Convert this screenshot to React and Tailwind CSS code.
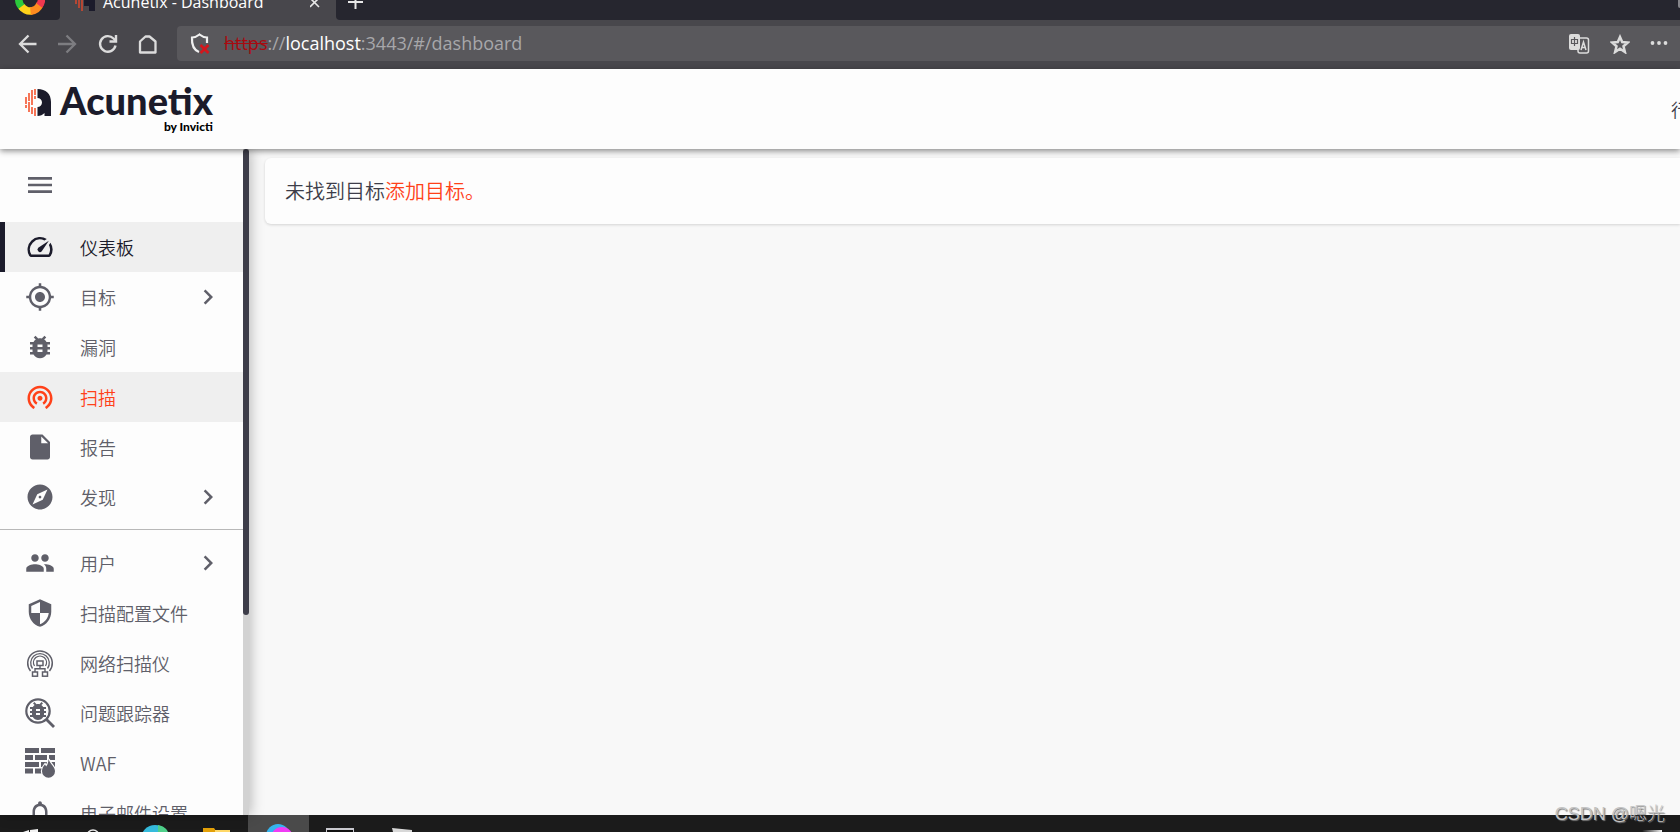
import React, { useState } from 'react';
import {
  MdMenu,
  MdOutlineSpeed,
  MdGpsFixed,
  MdBugReport,
  MdWifiTethering,
  MdInsertDriveFile,
  MdExplore,
  MdPeople,
  MdSecurity,
  MdNotificationsNone,
  MdChevronRight,
} from 'react-icons/md';

const NetworkScannerIcon = () => (
  <svg width="30" height="30" viewBox="0 0 30 30" fill="none" stroke="currentColor">
    <path d="M5.500 23A12.300 12.300 0 1 1 24.500 23" strokeWidth="1.500" />
    <path d="M7.500 20.500A9.300 9.300 0 1 1 22.500 20.500" strokeWidth="1.300" />
    <path d="M9.500 18A6.500 6.500 0 1 1 20.500 18" strokeWidth="1.300" />
    <rect x="12" y="13" width="6" height="4.500" strokeWidth="1.500" />
    <path d="M15 17.500v3M10 24v-3.300h10V24" strokeWidth="1.400" />
    <rect x="7.500" y="24" width="5" height="4.200" strokeWidth="1.500" />
    <rect x="17.500" y="24" width="5" height="4.200" strokeWidth="1.500" />
  </svg>
);

const IssueTrackerIcon = () => (
  <svg width="30" height="30" viewBox="0 0 30 30" fill="none" stroke="currentColor">
    <circle cx="13" cy="13" r="11.700" strokeWidth="2.200" />
    <path d="M21.500 21.500l7.500 7.500" strokeWidth="2.800" />
    <MdBugReport x="1" y="1" size={24} />
  </svg>
);

const WafIcon = () => (
  <svg width="30" height="30" viewBox="0 0 30 30" fill="currentColor">
    <path d="M0 0h14v5H0zM16 0h14v5H16zM0 7h8v5H0zM10 7h12v5H10zM24 7h6v5h-6zM0 14h14v5H0zM16 14h14v5H16zM0 20.500h8v5H0zM10 20.500h8v5h-8z" />
    <path
      d="M23.500 11c1 4.500 6.500 7.500 6.500 12.200a6.500 6.500 0 0 1-13 0c0-3 1.500-5 3-6.700l1.200 2c1.500-2 2.300-4.500 2.300-7.500z"
      stroke="#fdfdfd"
      strokeWidth="2.400"
      paintOrder="stroke"
    />
  </svg>
);

const mainItems = [
  { id: 'dashboard', label: '仪表板', icon: MdOutlineSpeed },
  { id: 'targets', label: '目标', icon: MdGpsFixed, sub: true },
  { id: 'vulns', label: '漏洞', icon: MdBugReport },
  { id: 'scans', label: '扫描', icon: MdWifiTethering },
  { id: 'reports', label: '报告', icon: MdInsertDriveFile },
  { id: 'discovery', label: '发现', icon: MdExplore, sub: true },
];

const settingItems = [
  { id: 'users', label: '用户', icon: MdPeople, sub: true },
  { id: 'profiles', label: '扫描配置文件', icon: MdSecurity },
  { id: 'scanner', label: '网络扫描仪', icon: NetworkScannerIcon },
  { id: 'tracker', label: '问题跟踪器', icon: IssueTrackerIcon },
  { id: 'waf', label: 'WAF', icon: WafIcon },
  { id: 'email', label: '电子邮件设置', icon: MdNotificationsNone },
];

function NavItem({ item, active, onSelect }) {
  const Icon = item.icon;
  let look = 'border-transparent text-[#5f5f69]';
  if (active) look = 'border-[#1b1b2b] bg-[#efefef] text-[#1b1b2b]';
  else if (item.id === 'scans') look = 'border-transparent bg-[#efefef] text-[#ff4119]';

  return (
    <li>
      <a
        href={`#/${item.id}`}
        onClick={() => onSelect(item.id)}
        className={`flex h-[50px] items-center border-l-[5px] pl-5 pr-5 text-lg font-[350] ${look}`}
      >
        <span className="flex w-[30px] shrink-0 justify-center">
          <Icon size={30} />
        </span>
        <span className="ml-[25px] flex-1">{item.label}</span>
        {item.sub && <MdChevronRight size={30} />}
      </a>
    </li>
  );
}

function BrowserBar() {
  return (
    <div className="shrink-0 bg-[#48474c] font-['Open_Sans','Noto_Sans_CJK_SC',sans-serif]">
      {/* Tabs */}
      <div className="flex h-5 overflow-hidden">
        <div className="flex w-[60px] shrink-0 items-start justify-center rounded-br bg-[#26262f]">
          <svg width="30" height="18" viewBox="0 0 30 18" fill="none" strokeWidth="7.500">
            <path d="M4 -3A11.500 11.500 0 0 0 8 8" stroke="#2bc93b" />
            <path d="M6.500 6.500A11.500 11.500 0 0 0 17 11" stroke="#ffd21a" />
            <path d="M15.500 11.200A11.500 11.500 0 0 0 25 4" stroke="#ff8b1f" />
            <path d="M24.300 5.500A11.500 11.500 0 0 0 26.500 -3" stroke="#f0384f" />
          </svg>
        </div>
        <div className="flex w-[276px] shrink-0 items-start text-white">
          <svg width="20" height="12" viewBox="0 0 20 12" className="ml-[15px]">
            <path d="M1 0v4M4 0v8M7 0v11" stroke="#d9482c" strokeWidth="1.500" />
            <path d="M9 0h11v11h-6V6H9z" fill="#1b1b2b" />
          </svg>
          <span className="-mt-2.5 ml-2 flex-1 text-base leading-6">Acunetix - Dashboard</span>
          <button aria-label="Close tab" className="mr-4">
            <svg width="10" height="10" viewBox="0 0 10 10" stroke="#e8e8e8" strokeWidth="1.600">
              <path d="M0 -2l9 9M9 -2l-9 9" />
            </svg>
          </button>
        </div>
        <div className="flex flex-1 items-start justify-between rounded-bl bg-[#26262f] pl-3">
          <button aria-label="New tab">
            <svg width="15" height="10" viewBox="0 0 15 10" stroke="#e8e8e8" strokeWidth="2">
              <path d="M0 2h15M7.500 0v9" />
            </svg>
          </button>
          <span className="h-2 w-0.5 rounded-bl bg-[#85858a]" />
        </div>
      </div>

      {/* Address row */}
      <div className="flex h-[49px] items-center pb-0.5 pl-[18px]">
        <div className="flex items-center gap-5 text-[#dcdcdc]">
          <button aria-label="Back">
            <svg width="20" height="20" viewBox="0 0 20 20" fill="none" stroke="currentColor" strokeWidth="2.300">
              <path d="M18.500 10H2M10.500 1.500L2 10l8.500 8.500" />
            </svg>
          </button>
          <button aria-label="Forward" className="text-[#7d7d81]">
            <svg width="20" height="20" viewBox="0 0 20 20" fill="none" stroke="currentColor" strokeWidth="2.300">
              <path d="M0 10h17M8.500 1.500L17 10l-8.500 8.500" />
            </svg>
          </button>
          <button aria-label="Reload">
            <svg width="20" height="20" viewBox="0 0 20 20" fill="none" stroke="currentColor" strokeWidth="2.400">
              <path d="M17.500 11.500A7.800 7.800 0 1 1 15.500 4.500L18 7" />
              <path d="M18 1v6.500h-6.500" />
            </svg>
          </button>
          <button aria-label="Home">
            <svg width="20" height="20" viewBox="0 0 20 20" fill="none" stroke="currentColor" strokeWidth="2.300" strokeLinejoin="round">
              <path d="M2 7.500l5.500-5h4l6 5v11H2z" />
            </svg>
          </button>
        </div>
        <div className="ml-[19px] flex h-[35px] flex-1 items-center rounded-l bg-[#59585c] pl-[13px] pr-3 text-lg leading-6 text-[#a7a7aa]">
          <svg width="22" height="22" viewBox="0 0 22 22" fill="none">
            <path d="M9 19C4 17 1.500 13 2 4.500c3 0 5-1 7.500-3 2.500 2 4.500 3 7.500 3V10" stroke="#f0f0f0" strokeWidth="2.200" />
            <path d="M10.500 12l8 8M18.500 12l-8 8" stroke="#d4161c" strokeWidth="2.600" />
          </svg>
          <span className="ml-3 flex-1 pb-0.5">
            <s className="text-[#a80a10]">https</s>://<span className="text-white">localhost</span>:3443/#/dashboard
          </span>
          <div className="flex items-center gap-5 text-[#dcdcdc]">
            <button aria-label="Translate">
              <svg width="22" height="22" viewBox="0 0 22 22" fill="none">
                <rect x="10" y="5" width="10.500" height="15" rx="2" stroke="currentColor" strokeWidth="1.500" />
                <rect x="1" y="1" width="11" height="16" rx="2" fill="currentColor" />
                <path d="M3.500 6.500h6v4h-6zM6.500 4v9" stroke="#59585c" strokeWidth="1.200" />
                <path d="M13 17l2.500-8 2.500 8M13.500 14.500h4" stroke="currentColor" strokeWidth="1.500" />
              </svg>
            </button>
            <button aria-label="Favourite">
              <svg width="20" height="20" viewBox="0 0 20 20" fill="none" stroke="currentColor" strokeWidth="2.500">
                <path d="M10 3l2.200 5 5.600.5-4.300 3.800 1.400 5.700-4.900-3.200L5.100 18l1.400-5.700-4.300-3.800L7.800 8z" />
              </svg>
            </button>
            <button aria-label="More">
              <svg width="18" height="6" viewBox="0 0 18 6" fill="currentColor">
                <circle cx="2.500" cy="2" r="1.900" />
                <circle cx="9" cy="2" r="1.900" />
                <circle cx="15.500" cy="2" r="1.900" />
              </svg>
            </button>
          </div>
        </div>
      </div>
    </div>
  );
}

function Header() {
  return (
    <header className="relative z-20 flex h-20 shrink-0 justify-between bg-[#fdfdfd] shadow-[0_2px_6px_rgba(0,0,0,0.45)]">
      <a href="#/dashboard" className="ml-[25px] flex pt-3 text-[#1b1b2b]">
        <svg width="26" height="27" viewBox="0 0 26 27" className="mt-2">
          <path d="M1 8v7M1 16v3M4 4v8M4 13v10M7 1v15M7 18v7M10 0v6M10 7v3M10 19v8" stroke="#f4542f" strokeWidth="1.600" />
          <path d="M12.500 0C21 0 26 5 26 13v14h-6.500v-3c-2 2-4 3-7 3v-9a4.500 4.500 0 0 0 0-9z" fill="currentColor" />
        </svg>
        <span className="ml-[9px] flex flex-col items-end font-[Lato,sans-serif]">
          <span className="text-[38px] font-black leading-[38px]">Acunetix</span>
          <span className="text-xs font-black leading-4 text-black">by Invicti</span>
        </span>
      </a>
      <button className="w-[9px] overflow-hidden whitespace-nowrap text-left text-lg font-[350] text-[#3d3d49]">行</button>
    </header>
  );
}

function Taskbar() {
  return (
    <footer className="flex h-[17px] shrink-0 items-end overflow-hidden bg-[#1b1b1b]">
      <button aria-label="Start" className="flex w-[62px] justify-center">
        <svg width="18" height="3" viewBox="0 0 18 3" fill="#f2f2f2">
          <path d="M1 3l6-2v2zM8 1l8-1v3H8z" />
        </svg>
      </button>
      <button aria-label="Search" className="flex w-[62px] justify-center">
        <svg width="14" height="3" viewBox="0 0 14 3" fill="none" stroke="#e6e6e6" strokeWidth="1.500">
          <circle cx="7" cy="7" r="6" />
        </svg>
      </button>
      <button aria-label="Edge" className="flex w-[62px] justify-center">
        <svg width="28" height="7" viewBox="0 0 28 7">
          <circle cx="14" cy="14" r="14" fill="#35bbdc" />
          <path d="M17 0c5 1 8 3 10 7H17z" fill="#4fd08a" />
        </svg>
      </button>
      <button aria-label="Files" className="flex w-[62px] justify-center">
        <svg width="28" height="5" viewBox="0 0 28 5">
          <path d="M0 1h11l2 3v1H0z" fill="#e3a008" />
          <path d="M12 3h15v2H12z" fill="#ffd867" />
        </svg>
      </button>
      <button aria-label="Browser" className="flex h-full w-[61px] items-end justify-center bg-[#4a4a4a]">
        <svg width="28" height="8" viewBox="0 0 28 8">
          <circle cx="13" cy="12" r="12" fill="#35b4ee" />
          <circle cx="17" cy="14" r="11" fill="#f03cf5" />
        </svg>
      </button>
      <button aria-label="Terminal" className="flex w-[62px] justify-center">
        <svg width="28" height="4" viewBox="0 0 28 4">
          <path d="M0 0h28v4H0z" fill="#c9c9cf" />
          <path d="M1 2h26v2H1z" fill="#111" />
        </svg>
      </button>
      <button aria-label="Editor" className="flex w-[62px] justify-center">
        <svg width="22" height="4" viewBox="0 0 22 4">
          <path d="M1 0l20 2v2H2z" fill="#d8d8d8" />
        </svg>
      </button>
      <button aria-label="Notifications" className="ml-auto mr-[18px]">
        <svg width="20" height="2" viewBox="0 0 20 2">
          <path d="M0 1l20-1v2z" fill="#f2f2f2" />
        </svg>
      </button>
    </footer>
  );
}

export default function App() {
  const [current, setCurrent] = useState('dashboard');

  return (
    <div className="relative flex h-screen flex-col overflow-hidden bg-[#f8f8f8] font-['Noto_Sans_CJK_SC',sans-serif]">
      <BrowserBar />
      <Header />
      <div className="flex min-h-0 flex-1">
        <aside className="z-10 flex w-[249px] shrink-0 bg-[#fdfdfd] shadow-[2px_0_12px_rgba(0,0,0,0.25)]">
          <nav className="flex-1 overflow-hidden">
            <div className="flex h-[73px] items-center pb-0.5 pl-6 text-[#5f5f69]">
              <button aria-label="Menu">
                <MdMenu size={32} />
              </button>
            </div>
            <ul className="border-b border-[#b8b8b8] pb-[7px]">
              {mainItems.map((item) => (
                <NavItem key={item.id} item={item} active={current === item.id} onSelect={setCurrent} />
              ))}
            </ul>
            <ul className="pt-2">
              {settingItems.map((item) => (
                <NavItem key={item.id} item={item} active={current === item.id} onSelect={setCurrent} />
              ))}
            </ul>
          </nav>
          <div className="w-1.5 bg-[#d2d2d2]">
            <div className="h-[70%] rounded-full bg-[#3d3d49]" />
          </div>
        </aside>
        <main className="min-w-0 flex-1 pl-4 pt-[9px]">
          <p className="rounded-l-md bg-[#fdfdfd] px-5 py-[18px] text-xl leading-[30px] font-[350] text-[#3d3d49] shadow-[0_1px_3px_rgba(0,0,0,0.15)]">
            未找到目标
            <a href="#/targets/add" className="text-[#ff4119]">添加目标。</a>
          </p>
        </main>
      </div>
      <Taskbar />
      <span className="pointer-events-none absolute bottom-1.5 right-[15px] z-30 font-['Liberation_Sans','Noto_Sans_CJK_SC',sans-serif] text-lg leading-6 font-light text-[#c4c4c4] [text-shadow:1px_1px_1px_#777]">
        CSDN @嗯光
      </span>
    </div>
  );
}
